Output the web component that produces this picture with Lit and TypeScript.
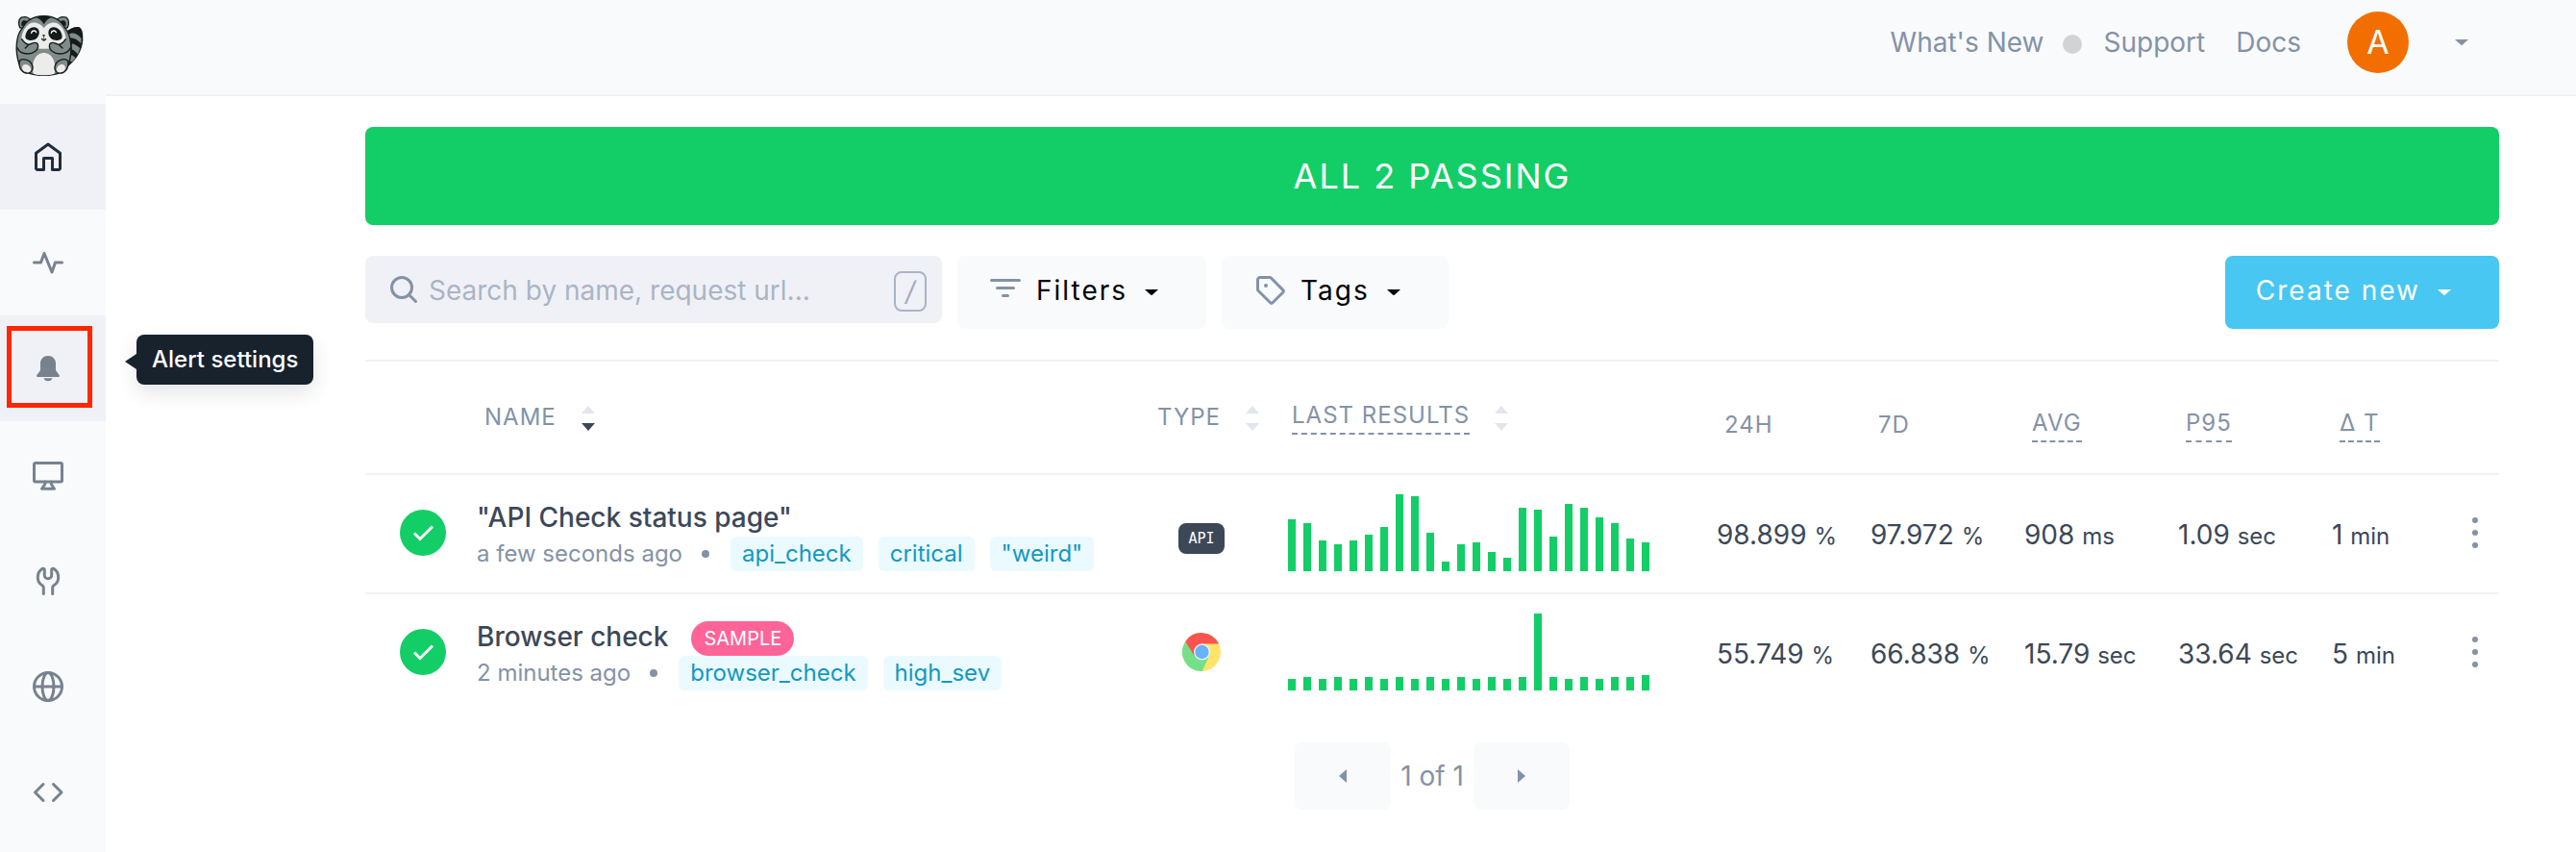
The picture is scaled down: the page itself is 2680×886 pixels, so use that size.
import { LitElement, html, css, svg } from "lit";
import { customElement, property } from "lit/decorators.js";
import { classMap } from "lit/directives/class-map.js";

interface Metric {
  value: string;
  unit: string;
}

interface Check {
  name: string;
  ago: string;
  sample: boolean;
  type: "api" | "browser";
  tags: string[];
  results: number[];
  metrics: Metric[];
}

const CHECKS: Check[] = [
  {
    name: '"API Check status page"',
    ago: "a few seconds ago",
    sample: false,
    type: "api",
    tags: ["api_check", "critical", '"weird"'],
    results: [54, 50, 32, 28, 32, 38, 46, 80, 78, 40, 10, 28, 30, 20, 14, 66, 64, 36, 70, 66, 56, 50, 34, 30],
    metrics: [
      { value: "98.899", unit: "%" },
      { value: "97.972", unit: "%" },
      { value: "908", unit: "ms" },
      { value: "1.09", unit: "sec" },
      { value: "1", unit: "min" },
    ],
  },
  {
    name: "Browser check",
    ago: "2 minutes ago",
    sample: true,
    type: "browser",
    tags: ["browser_check", "high_sev"],
    results: [12, 14, 12, 14, 12, 14, 12, 14, 12, 14, 12, 14, 12, 14, 12, 14, 80, 14, 12, 14, 12, 14, 14, 16],
    metrics: [
      { value: "55.749", unit: "%" },
      { value: "66.838", unit: "%" },
      { value: "15.79", unit: "sec" },
      { value: "33.64", unit: "sec" },
      { value: "5", unit: "min" },
    ],
  },
];

const NAV = [
  {
    label: "Home",
    state: "current",
    icon: svg`<path d="M5 29.5a1.5 1.5 0 0 1-1.5-1.5V12.2L16 3l12.5 9.2V28a1.5 1.5 0 0 1-1.5 1.5h-6.5V17.5h-9v12Z"/>`,
  },
  {
    label: "Monitoring",
    state: "",
    icon: svg`<path d="M1.5 16H8.5L12 6.5 20 26 23.5 16H30.5"/>`,
  },
  {
    label: "Alert settings",
    state: "hover",
    icon: svg`<path class="solid" d="M16 3c-4.6 0-8 3.4-8 8v6.2c0 .7-.2 1.3-.6 1.9l-3 4c-.9 1.2-.2 2 1 2h21.2c1.2 0 1.9-.8 1-2l-3-4c-.4-.6-.6-1.2-.6-1.9V11c0-4.6-3.400-8-8-8Z"/><path class="solid" d="M11.5 26.3h9a4.6 3.8 0 0 1-9 0Z"/>`,
  },
  {
    label: "Dashboards",
    state: "",
    icon: svg`<rect x="1.5" y="4.5" width="29" height="19.5" rx="1.5"/><path d="M12.8 24v2.500L9.5 31.300h13L19.3 26.500V24"/>`,
  },
  {
    label: "Maintenance",
    state: "",
    icon: svg`<path d="M11.3 30.5V24c0-1-.5-1.7-1.3-2.2C7 20 5.3 17 5.3 13.500c0-4 1.800-7 4.500-8.900 1.300-.9 2.500-.3 2.500 1.200v5.500a3.700 3.500 0 0 0 7.400 0V5.800c0-1.500 1.200-2.100 2.500-1.200 2.700 1.900 4.500 4.900 4.500 8.900 0 3.500-1.700 6.500-4.700 8.300-.8.5-1.300 1.200-1.300 2.200v6.500"/>`,
  },
  {
    label: "Locations",
    state: "",
    icon: svg`<circle cx="16" cy="17" r="14.5"/><ellipse cx="16" cy="17" rx="6" ry="14.5"/><path d="M1.5 17h29"/>`,
  },
  {
    label: "Code",
    state: "",
    icon: svg`<path d="M11 8.5 2.5 17l8.5 8.5M21.5 8.5 30 17l-8.5 8.5"/>`,
  },
];

const COLUMNS = [
  { label: "24H", hint: false },
  { label: "7D", hint: false },
  { label: "AVG", hint: true },
  { label: "P95", hint: true },
  { label: "Δ T", hint: true },
];

const caret = html`<svg class="caret" viewBox="0 0 14 6" aria-hidden="true"><path d="M0 0h14L8 5.6Q7 6.4 6 5.6Z" /></svg>`;

const raccoon = html`<svg class="logo" viewBox="42 42 222 204" aria-hidden="true">
  <g stroke="#151b1b" stroke-width="4" stroke-linejoin="round" stroke-linecap="round" fill="#808c8a">
    <path d="M205 103C218 91 232 84 246 86 255 90 258 106 257 125 254 158 238 186 205 210Z" fill="#151b1b" />
    <path d="M215 106C228 100 244 106 254 120L253 136C243 124 232 118 217 118Z" stroke="none" />
    <path d="M224 136C234 138 244 146 250 150L243 170C236 160 230 156 224 154Z" stroke="none" />
    <path d="M223 172C229 174 233 178 236 181L225 193 217 190Z" stroke="none" />
    <path d="M62 86C55 70 59 53 74 53 86 52 95 60 98 66L74 90Z" />
    <path d="M211 86C218 70 214 53 199 53 187 52 178 60 175 66L199 90Z" />
    <path d="M68 82C64 70 70 62 78 64 85 65 88 70 88 73Z" fill="#151b1b" stroke="none" />
    <path d="M205 82C209 70 203 62 195 64 188 65 185 70 185 73Z" fill="#151b1b" stroke="none" />
    <path d="M137 50C166 50 190 64 202 86 224 110 227 160 214 200 202 228 166 235 137 235 107 235 72 228 60 200 46 160 49 110 71 86 83 64 107 50 137 50Z" />
    <path d="M104 230C96 190 114 165 137 165 159 165 178 190 170 230 150 236 122 236 104 230Z" fill="#ecedea" stroke="none" />
    <path d="M137 88C128 74 108 66 92 74 78 82 68 102 67 122 84 148 112 152 137 152 162 152 188 148 206 122 205 102 195 82 181 74 165 66 146 74 137 88Z" fill="#ecedea" stroke="none" />
    <path d="M110 53C120 56 130 62 137 76 144 62 153 56 163 53 146 48 127 48 110 53Z" fill="#151b1b" stroke="none" />
    <path d="M79 115C80 98 92 85 106 85 119 86 125 96 121 109 117 121 106 127 94 126 84 125 79 121 79 115Z" fill="#151b1b" stroke="none" />
    <path d="M194 115C193 98 181 85 167 85 154 86 149 96 152 109 156 121 167 127 179 126 189 125 194 121 194 115Z" fill="#151b1b" stroke="none" />
    <path d="M98 103C99 94 111 94 113 101M160 103C161 94 173 94 175 101" fill="none" stroke="#fff" />
    <path d="M131 109h11l-5.5 6Z" fill="#151b1b" stroke="none" />
    <path d="M137 115v5M130 121c4 3 10 3 14 0-1 8-13 8-14 0Z" fill="#151b1b" stroke-width="2" />
    <path d="M68 122C74 132 82 138 90 139L101 135C110 131 119 134 119 143 119 156 104 168 86 168 70 168 58 160 53 148" />
    <path d="M205 122C199 132 191 138 183 139L172 135C163 131 154 134 154 143 154 156 169 168 187 168 203 168 215 160 221 148" />
    <path d="M90 139 79 150M183 139 195 150" fill="none" />
    <path d="M60 196C60 186 72 182 84 187 98 192 105 206 101 218 98 228 86 231 75 226 65 221 60 209 60 196Z" />
    <path d="M213 196C213 186 201 182 189 187 175 192 168 206 172 218 175 228 187 231 198 226 208 221 213 209 213 196Z" />
    <path d="M69 211C70 200 82 198 90 205 98 212 98 222 92 225 82 228 70 223 69 211Z" fill="#ecedea" stroke="none" />
    <path d="M204 211C203 200 191 198 183 205 175 212 175 222 181 225 191 228 203 223 204 211Z" fill="#ecedea" stroke="none" />
  </g>
</svg>`;

const chrome = html`<svg class="chrome" viewBox="0 0 40 40" role="img" aria-label="Browser">
  <circle cx="20" cy="20" r="20" fill="#ffe36b" />
  <path d="M3.2 9.2A20 20 0 0 0 20.7 40L27.5 25 20 20Z" fill="#74e089" />
  <path d="M3.2 9.2A20 20 0 0 1 38 11.5H20L12.8 24.2Z" fill="#fa5450" />
  <circle cx="20.5" cy="20" r="8.5" fill="#f1f5f9" />
  <circle cx="20.5" cy="20" r="7.2" fill="#66b3fa" />
</svg>`;

@customElement("side-nav")
export class SideNav extends LitElement {
  static styles = css`
    :host {
      display: block;
      width: 110px;
      flex: none;
      background: #f9fafc;
      font-family: Inter, "Liberation Sans", sans-serif;
    }
    .brand {
      display: block;
      height: 94px;
      padding: 14px 0 0 14px;
    }
    .logo {
      display: block;
      width: 74px;
      height: 68px;
    }
    .item {
      position: relative;
      display: flex;
      align-items: center;
      justify-content: center;
      height: 110px;
      padding-right: 10px;
      color: #78828f;
    }
    .current,
    .hover {
      background: #f0f1f7;
    }
    .current {
      color: #1f2d3d;
    }
    .icon {
      width: 36px;
      height: 36px;
      fill: none;
      stroke: currentColor;
      stroke-width: 3;
      stroke-linecap: round;
      stroke-linejoin: round;
    }
    .solid {
      fill: currentColor;
      stroke: none;
    }
    .focus {
      position: absolute;
      inset: 11px 14px 14px 7px;
      border: 5px solid #ff2600;
    }
    .tooltip {
      position: absolute;
      left: 142px;
      top: 20px;
      z-index: 1;
      padding: 10px 16px;
      border-radius: 8px;
      background: #17222d;
      box-shadow: 0 8px 20px rgba(23, 34, 45, 0.12);
      color: #fff;
      font-size: 24px;
      font-weight: 500;
      line-height: 32px;
      white-space: nowrap;
    }
    .tooltip::before {
      content: "";
      position: absolute;
      left: -12px;
      top: 20px;
      border: solid transparent;
      border-width: 8px 12px 8px 0;
      border-right-color: #17222d;
    }
  `;

  render() {
    return html`
      <a class="brand" href="#" aria-label="Dashboard">${raccoon}</a>
      <nav>
        ${NAV.map(
          (n) => html`<a
            href="#"
            aria-label=${n.label}
            class=${classMap({ item: true, current: n.state === "current", hover: n.state === "hover" })}
          >
            <svg class="icon" viewBox="-2 -2 36 36" aria-hidden="true">${n.icon}</svg>
            ${n.state === "hover" ? html`<span class="focus"></span><span class="tooltip" role="tooltip">${n.label}</span>` : ""}
          </a>`
        )}
      </nav>
    `;
  }
}

@customElement("top-bar")
export class TopBar extends LitElement {
  static styles = css`
    :host {
      display: flex;
      align-items: center;
      justify-content: flex-end;
      padding: 12px 112px 22px 32px;
      border-bottom: 2px solid #f0f1f7;
      background: #f9fafc;
      color: #8492a6;
      font-family: Inter, "Liberation Sans", sans-serif;
      font-size: 28px;
      line-height: 36px;
    }
    .link {
      color: inherit;
      text-decoration: none;
    }
    .dot {
      width: 20px;
      height: 20px;
      margin: 4px 22px 0 20px;
      border-radius: 50%;
      background: #d3d3d3;
    }
    .docs {
      margin: 0 48px 0 32px;
    }
    .avatar {
      display: grid;
      place-items: center;
      width: 64px;
      height: 64px;
      border-radius: 50%;
      background: #f26e00;
      color: #fff;
      font-size: 34px;
    }
    .menu {
      display: flex;
      margin-left: 48px;
      padding: 0;
      border: 0;
      background: none;
      color: inherit;
    }
    .caret {
      width: 14px;
      height: 6px;
      fill: currentColor;
    }
  `;

  render() {
    return html`
      <a class="link" href="#">What's New</a>
      <span class="dot"></span>
      <a class="link" href="#">Support</a>
      <a class="link docs" href="#">Docs</a>
      <span class="avatar">A</span>
      <button class="menu" aria-label="Account menu">${caret}</button>
    `;
  }
}

@customElement("result-chart")
export class ResultChart extends LitElement {
  @property({ attribute: false }) values: number[] = [];

  static styles = css`
    :host {
      display: flex;
      align-items: flex-end;
      gap: 8px;
      height: 80px;
    }
    .bar {
      width: 8px;
      background: #13ce66;
    }
  `;

  render() {
    return this.values.map((v) => html`<span class="bar" style="height:${v}px"></span>`);
  }
}

@customElement("check-table")
export class CheckTable extends LitElement {
  @property({ attribute: false }) checks: Check[] = [];

  static styles = css`
    :host {
      display: block;
    }
    .table {
      width: 100%;
      table-layout: fixed;
      border-spacing: 0;
      border-top: 2px solid #f0f1f7;
      color: #3c4858;
      font-size: 28px;
      line-height: 36px;
    }
    .c-status {
      width: 116px;
    }
    .c-type {
      width: 140px;
    }
    .c-results {
      width: 450px;
    }
    .c-metric {
      width: 160px;
    }
    .c-delta {
      width: 124px;
    }
    .c-menu {
      width: 50px;
    }
    .th {
      padding: 38px 0 38px 8px;
      border-bottom: 2px solid #f0f1f7;
      color: #8492a6;
      font-size: 24px;
      font-weight: 400;
      line-height: 32px;
      letter-spacing: 1px;
      text-align: left;
      white-space: nowrap;
    }
    .th.metric {
      padding: 46px 0 30px 8px;
    }
    .head {
      display: flex;
      align-items: center;
      gap: 26px;
      height: 40px;
    }
    .hint {
      padding-bottom: 2px;
      border-bottom: 2px dashed #8492a6;
    }
    .sort {
      padding: 2px 0 0;
      border: 0;
      background: none;
      display: flex;
    }
    .arrows {
      width: 14px;
      height: 26px;
      fill: #e0e6ed;
    }
    .active {
      fill: #3c4858;
    }
    .td {
      padding: 20px 0 22px;
      border-bottom: 2px solid #f0f1f7;
      vertical-align: middle;
    }
    .row:last-child .td {
      border-bottom: 0;
    }
    .td.status {
      padding-left: 36px;
    }
    .pass {
      display: block;
      width: 48px;
      height: 48px;
    }
    .td.name {
      padding-top: 26px;
      vertical-align: top;
    }
    .title {
      display: flex;
      gap: 24px;
      height: 38px;
      font-weight: 500;
    }
    .sample {
      margin-top: 2px;
      padding: 0 13px;
      border-radius: 18px;
      background: #ff6499;
      color: #fff;
      font-size: 20px;
      font-weight: 400;
    }
    .meta {
      display: flex;
      align-items: center;
      color: #8492a6;
      font-size: 24px;
    }
    .bullet {
      width: 8px;
      height: 8px;
      margin: 0 22px 0 20px;
      border-radius: 50%;
      background: #8492a6;
    }
    .tags {
      display: flex;
      gap: 16px;
    }
    .tag {
      padding: 0 12px;
      border-radius: 6px;
      background: #ebfaff;
      color: #1298c3;
      text-decoration: none;
    }
    .td.type {
      padding-left: 30px;
    }
    .kind {
      display: flex;
      justify-content: center;
      width: 48px;
    }
    .api {
      width: 48px;
      margin-top: 12px;
      border-radius: 8px;
      background: #3c4858;
      color: #fff;
      font: 15px/32px "DejaVu Sans Mono", monospace;
      text-align: center;
    }
    .chrome {
      width: 40px;
      height: 40px;
    }
    .td.results {
      padding-left: 4px;
    }
    .td.metric {
      padding: 24px 0 20px;
      white-space: nowrap;
    }
    .unit {
      font-size: 24px;
    }
    .more {
      display: flex;
      margin: 0 auto;
      padding: 0;
      border: 0;
      background: none;
    }
    .dots {
      width: 6px;
      height: 32px;
      fill: #8492a6;
    }
  `;

  private sort(label: string, active = false) {
    return html`<button class="sort" aria-label="Sort by ${label}">
      <svg class="arrows" viewBox="0 0 14 26" aria-hidden="true">
        <path d="M0 8 7 0l7 8Z" />
        <path class=${active ? "active" : ""} d="M0 18h14l-7 8Z" />
      </svg>
    </button>`;
  }

  render() {
    return html`<table class="table">
      <colgroup>
        <col class="c-status" />
        <col />
        <col class="c-type" />
        <col class="c-results" />
        <col class="c-metric" />
        <col class="c-metric" />
        <col class="c-metric" />
        <col class="c-metric" />
        <col class="c-delta" />
        <col class="c-menu" />
      </colgroup>
      <thead>
        <tr>
          <td class="th"></td>
          <th class="th" scope="col"><div class="head"><span>NAME</span>${this.sort("name", true)}</div></th>
          <th class="th" scope="col"><div class="head"><span>TYPE</span>${this.sort("type")}</div></th>
          <th class="th" scope="col">
            <div class="head"><span class="hint">LAST RESULTS</span>${this.sort("last results")}</div>
          </th>
          ${COLUMNS.map(
            (c) => html`<th class="th metric" scope="col">
              <div class="head"><span class=${c.hint ? "hint" : ""}>${c.label}</span></div>
            </th>`
          )}
          <td class="th"></td>
        </tr>
      </thead>
      <tbody>
        ${this.checks.map(
          (c) => html`<tr class="row">
            <td class="td status">
              <svg class="pass" viewBox="0 0 48 48" role="img" aria-label="Passing">
                <circle cx="24" cy="24" r="24" fill="#13ce66" />
                <path d="m15 24.5 6 6L34 17.5" fill="none" stroke="#fff" stroke-width="3" />
              </svg>
            </td>
            <td class="td name">
              <div class="title">
                <span>${c.name}</span>${c.sample ? html`<span class="sample">SAMPLE</span>` : ""}
              </div>
              <div class="meta">
                <span>${c.ago}</span><span class="bullet"></span>
                <div class="tags">${c.tags.map((t) => html`<a class="tag" href="#">${t}</a>`)}</div>
              </div>
            </td>
            <td class="td type">
              <div class="kind">${c.type === "api" ? html`<span class="api">API</span>` : chrome}</div>
            </td>
            <td class="td results"><result-chart .values=${c.results}></result-chart></td>
            ${c.metrics.map((m) => html`<td class="td metric">${m.value} <span class="unit">${m.unit}</span></td>`)}
            <td class="td">
              <button class="more" aria-label="Options">
                <svg class="dots" viewBox="0 0 6 32" aria-hidden="true">
                  <circle cx="3" cy="3" r="3" />
                  <circle cx="3" cy="16" r="3" />
                  <circle cx="3" cy="29" r="3" />
                </svg>
              </button>
            </td>
          </tr>`
        )}
      </tbody>
    </table>`;
  }
}

@customElement("app-root")
export class AppRoot extends LitElement {
  static styles = css`
    :host {
      display: flex;
      min-height: 100vh;
      background: #fff;
      font-family: Inter, "Liberation Sans", sans-serif;
    }
    .page {
      flex: 1;
      min-width: 0;
    }
    .main {
      padding: 32px 80px 32px 270px;
    }
    .banner {
      padding: 27px 0;
      border-radius: 8px;
      background: #13ce66;
      color: #fff;
      font-size: 36px;
      line-height: 48px;
      letter-spacing: 2px;
      text-align: center;
    }
    .toolbar {
      display: flex;
      align-items: flex-start;
      gap: 16px;
      margin: 32px 0;
    }
    .search {
      display: flex;
      align-items: center;
      width: 600px;
      height: 70px;
      box-sizing: border-box;
      padding: 0 16px 0 26px;
      border-radius: 8px;
      background: #f0f1f7;
      color: #8492a6;
    }
    .lens {
      width: 28px;
      height: 28px;
      flex: none;
      fill: none;
      stroke: currentColor;
      stroke-width: 3;
      stroke-linecap: round;
    }
    .field {
      flex: 1;
      min-width: 0;
      margin-left: 12px;
      padding: 2px 0 0;
      border: 0;
      outline: 0;
      background: none;
      color: #3c4858;
      font: inherit;
      font-size: 28px;
    }
    .field::placeholder {
      color: #aab5c4;
      opacity: 1;
    }
    .key {
      width: 30px;
      margin-top: 4px;
      border: 2px solid #a9b5c5;
      border-radius: 8px;
      color: #a0acbc;
      font: italic 28px/38px Inter, sans-serif;
      text-align: center;
    }
    .btn {
      display: flex;
      align-items: center;
      height: 76px;
      padding: 0 50px 4px 34px;
      border: 0;
      border-radius: 8px;
      background: #f9fafc;
      color: #000;
      font: inherit;
      font-size: 28px;
      letter-spacing: 2px;
    }
    .btn .caret {
      margin-left: 18px;
      margin-top: 4px;
    }
    .icon {
      width: 32px;
      height: 32px;
      margin-right: 16px;
      fill: none;
      stroke: #8492a6;
      stroke-width: 3;
      stroke-linecap: round;
    }
    .caret {
      width: 14px;
      height: 6px;
      fill: currentColor;
    }
    .create {
      margin-left: auto;
      padding-left: 32px;
      background: #47c7f1;
      color: #fff;
    }
    .pager {
      display: flex;
      align-items: center;
      justify-content: center;
      gap: 10px;
      margin-top: 32px;
      color: #8492a6;
      font-size: 28px;
      line-height: 36px;
    }
    .step {
      display: grid;
      place-items: center;
      width: 100px;
      height: 70px;
      padding: 0;
      border: 0;
      border-radius: 8px;
      background: #f9fafc;
      color: inherit;
    }
    .arrow {
      width: 8px;
      height: 14px;
      fill: currentColor;
    }
  `;

  render() {
    return html`
      <side-nav></side-nav>
      <div class="page">
        <top-bar></top-bar>
        <main class="main">
          <div class="banner">ALL 2 PASSING</div>
          <div class="toolbar">
            <label class="search">
              <svg class="lens" viewBox="0 0 28 28" aria-hidden="true">
                <circle cx="12" cy="12" r="10.5" />
                <path d="m19.5 19.5 7 7" />
              </svg>
              <input class="field" type="text" aria-label="Search checks" placeholder="Search by name, request url..." />
              <kbd class="key">/</kbd>
            </label>
            <button class="btn">
              <svg class="icon" viewBox="0 0 32 32" aria-hidden="true"><path d="M1.5 5.5h29M7.5 13.5h17M13.5 21.5h5" /></svg>
              <span>Filters</span>${caret}
            </button>
            <button class="btn">
              <svg class="icon" viewBox="-2 -1 32 32" aria-hidden="true">
                <path
                  stroke-linejoin="round"
                  d="M1.5 4A2.5 2.5 0 0 1 4 1.5H14.2C14.6 1.5 15 1.7 15.3 2L27.8 14.6C28.6 15.4 28.6 16.2 27.8 17L17 27.8C16.2 28.6 15.4 28.6 14.6 27.8L2 15.3C1.7 15 1.5 14.6 1.5 14.2Z"
                />
                <circle cx="10" cy="10" r="2" fill="#8492a6" stroke="none" />
              </svg>
              <span>Tags</span>${caret}
            </button>
            <button class="btn create"><span>Create new</span>${caret}</button>
          </div>
          <check-table .checks=${CHECKS}></check-table>
          <nav class="pager" aria-label="Pages">
            <button class="step" aria-label="Previous page">
              <svg class="arrow" viewBox="0 0 8 14" aria-hidden="true"><path d="M8 0v14L0 7Z" /></svg>
            </button>
            <span>1 of 1</span>
            <button class="step" aria-label="Next page">
              <svg class="arrow" viewBox="0 0 8 14" aria-hidden="true"><path d="M0 0v14l8-7Z" /></svg>
            </button>
          </nav>
        </main>
      </div>
    `;
  }
}
